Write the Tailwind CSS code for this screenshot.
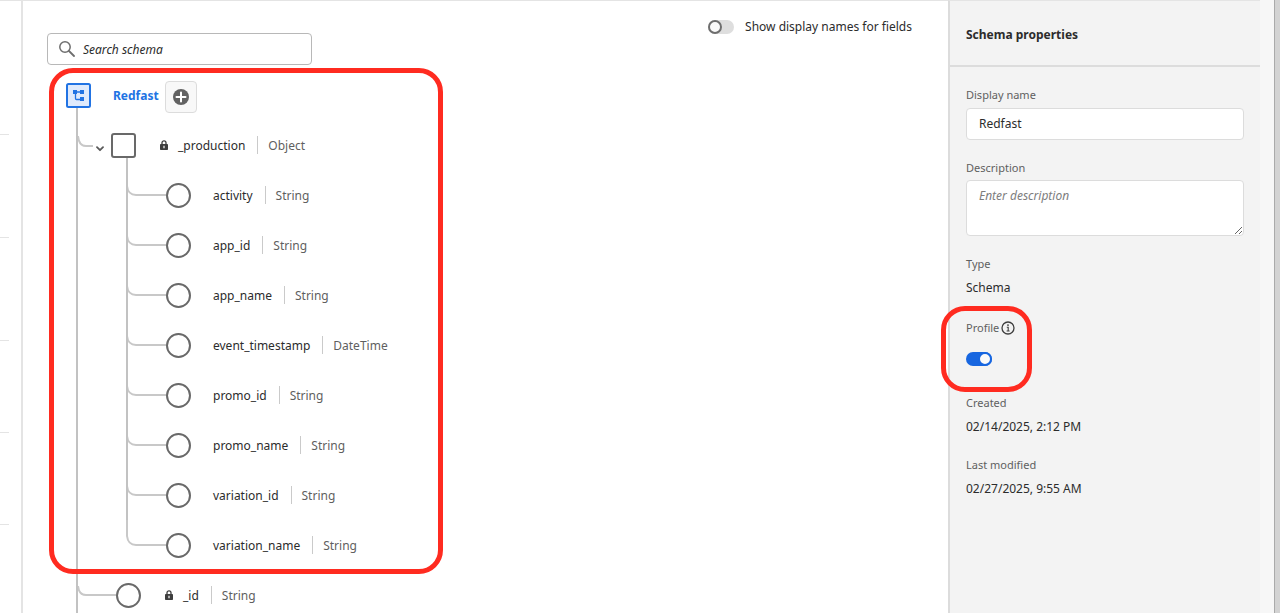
<!DOCTYPE html>
<html lang="en">

<head>
    <meta charset="UTF-8">
    <meta name="viewport" content="width=device-width, initial-scale=1.0">
    <title>Redfast schema</title>
    <script src="https://cdn.jsdelivr.net/npm/@tailwindcss/browser@4"></script>
</head>

<body class="h-screen overflow-hidden flex bg-white font-['Noto_Sans','Open_Sans',sans-serif] text-xs leading-5 text-[#2c2c2c]">
    <!-- Right edge of the field group list -->
    <div class="w-[23px] shrink-0 border-t border-r-2 border-t-[#e4e4e4] border-r-[#e4e4e4]">
        <div class="w-[9px] h-[134px] border-b border-[#e4e4e4]"></div>
        <div class="w-[9px] h-[103px] border-b border-[#e4e4e4]"></div>
        <div class="w-[9px] h-[103px] border-b border-[#e4e4e4]"></div>
        <div class="w-[9px] h-[92px] border-b border-[#e4e4e4]"></div>
        <div class="w-[9px] h-[92px] border-b border-[#e4e4e4]"></div>
    </div>

    <main class="flex-1 min-w-0 border-t border-[#e4e4e4]">
        <div class="flex items-start justify-between pl-6 pr-9">
            <div class="mt-8 w-[265px] h-8 flex items-center gap-2 px-[11px] border border-[#b8b8b8] rounded bg-white">
                <svg class="w-4 h-4 shrink-0" viewBox="0 0 16 16" fill="none" stroke="#6e6e6e" stroke-linecap="round">
                    <circle cx="6" cy="6" r="5.2" stroke-width="1.5" />
                    <path d="M10 10l5 5" stroke-width="1.8" />
                </svg>
                <input type="text" aria-label="Search schema" placeholder="Search schema"
                    class="flex-1 min-w-0 pt-[2px] italic outline-none placeholder:text-[#2c2c2c]">
            </div>
            <label class="mt-4 flex items-center gap-[11px] leading-5">
                <input type="checkbox"
                    class="appearance-none flex w-[26px] h-[14px] rounded-full bg-[#dedede] before:w-[14px] before:h-[14px] before:rounded-full before:border-2 before:border-[#6e6e6e] before:bg-[#fafafa]">
                Show display names for fields
            </label>
        </div>

        <!-- Schema tree -->
        <div class="relative mt-[6px]">
            <div class="h-[49px] flex items-center pl-[43px]">
                <svg class="w-[25px] h-[25px] shrink-0" viewBox="0 0 25 25">
                    <rect x="1" y="1" width="23" height="23" rx="1.5" fill="#dfeafc" stroke="#2173e3" stroke-width="2" />
                    <path d="M9 9h8M9.5 9v6.5q0 1 1 1H15" fill="none" stroke="#2173e3" stroke-width="1.3" />
                    <path d="M7 7h4v4H7zM14 7h4v4h-4zM14 14h4v4h-4z" fill="#2173e3" />
                </svg>
                <a href="#" class="ml-[22px] font-bold text-[#2173e3]">Redfast</a>
                <button type="button" aria-label="Add field"
                    class="ml-[6px] mt-[3px] w-8 h-8 flex items-center justify-center border border-[#dcdcdc] rounded bg-[#f8f8f8]">
                    <svg class="w-4 h-4" viewBox="0 0 16 16">
                        <circle cx="8" cy="8" r="8" fill="#626262" />
                        <path d="M8 3.5v9M3.5 8h9" stroke="#fff" stroke-width="2" stroke-linecap="round" />
                    </svg>
                </button>
            </div>

            <ul class="ml-[53px] -mt-3 pt-3 border-l-2 border-[#c2c2c2]">
                <li>
                    <div class="h-[50px] flex items-center">
                        <svg class="w-[15px] h-[50px]" viewBox="0 0 15 50" fill="none" stroke="#c8c8c8" stroke-width="2">
                            <path d="M0 16q1 10 8 10h7" />
                        </svg>
                        <button type="button" aria-label="Collapse _production" class="mt-[7px] w-[14px] h-[10px] flex items-center justify-center">
                            <svg class="w-2 h-[6px]" viewBox="0 0 8 6" fill="none" stroke="#5a5a5a" stroke-width="1.8" stroke-linecap="round" stroke-linejoin="round">
                                <path d="M1 1.2l3 3 3-3" />
                            </svg>
                        </button>
                        <button type="button" aria-label="Select _production" class="ml-1 mt-px w-[25px] h-[25px] border-2 border-[#696969] rounded-[3px] bg-white"></button>
                        <svg class="ml-6 w-2 h-[10px]" viewBox="0 0 8 10">
                            <path d="M2 5V2.8a2 2 0 0 1 4 0V5" fill="none" stroke="#3e3e3e" stroke-width="1.3" />
                            <rect y="4" width="8" height="6" rx=".8" fill="#3e3e3e" />
                            <path d="M4 5.8v2.4" stroke="#fff" stroke-width="1.2" />
                        </svg>
                        <span class="ml-[10px] pt-[2px]">_production</span>
                        <span class="ml-3 pl-[10px] h-[18px] leading-5 border-l border-[#cacaca] text-[#5f5f5f]">Object</span>
                    </div>

                    <ul id="productionFields" class="ml-12"></ul>
                </li>
                <li>
                    <div class="h-[50px] flex items-center">
                        <svg class="w-[38px] h-[50px]" viewBox="0 0 38 50" fill="none" stroke="#c8c8c8" stroke-width="2">
                            <path d="M0 16q1 9 8 9h30" />
                        </svg>
                        <button type="button" aria-label="Select _id" class="mt-px w-[25px] h-[25px] border-2 border-[#696969] rounded-full bg-white"></button>
                        <svg class="ml-6 w-2 h-[10px]" viewBox="0 0 8 10">
                            <path d="M2 5V2.8a2 2 0 0 1 4 0V5" fill="none" stroke="#3e3e3e" stroke-width="1.3" />
                            <rect y="4" width="8" height="6" rx=".8" fill="#3e3e3e" />
                            <path d="M4 5.8v2.4" stroke="#fff" stroke-width="1.2" />
                        </svg>
                        <span class="ml-[10px] pt-[2px]">_id</span>
                        <span class="ml-3 pl-[10px] h-[18px] leading-5 border-l border-[#cacaca] text-[#5f5f5f]">String</span>
                    </div>
                </li>
            </ul>

            <!-- Highlight around the production fields -->
            <div class="absolute left-[26px] -top-[3px] w-[394px] h-[506px] border-5 border-[#ff2b20] rounded-3xl pointer-events-none"></div>
        </div>
    </main>

    <aside class="w-[312px] shrink-0 border-t border-l-2 border-t-[#e4e4e4] border-l-[#dcdcdc] bg-[#f3f3f3]">
        <h2 class="h-[66px] pl-4 pt-6 border-b-2 border-[#dcdcdc] leading-5 font-bold">Schema properties</h2>
        <div class="px-4 pt-5">
            <label for="displayName" class="block text-[11px] leading-4 text-[#5f5f5f]">Display name</label>
            <input type="text" id="displayName" value="Redfast"
                class="block mt-[5px] w-full h-8 px-3 pb-[2px] border border-[#dcdcdc] rounded bg-white outline-none">
            <label for="description" class="block mt-5 text-[11px] leading-4 text-[#5f5f5f]">Description</label>
            <textarea id="description" placeholder="Enter description"
                class="block mt-1 w-full h-14 px-3 py-[5px] leading-5 border border-[#dcdcdc] rounded bg-white outline-none placeholder:italic placeholder:text-[#7d7d7d]"></textarea>

            <div class="mt-5 text-[11px] leading-4 text-[#5f5f5f]">Type</div>
            <div class="mt-[6px] leading-5">Schema</div>

            <div class="relative mt-[22px]">
                <div class="flex items-center gap-[2px] text-[11px] leading-4 text-[#5f5f5f]">
                    <label for="profile">Profile</label>
                    <svg class="w-[14px] h-[14px]" viewBox="0 0 14 14" fill="none" stroke="#3e3e3e">
                        <circle cx="7" cy="7" r="6" stroke-width="1.3" />
                        <path d="M5.8 6.2H7.2v3.6M5.6 10h3" stroke-width="1.1" />
                        <circle cx="7" cy="4.1" r=".9" fill="#3e3e3e" stroke="none" />
                    </svg>
                </div>
                <input type="checkbox" id="profile" checked
                    class="appearance-none flex justify-end mt-4 w-[26px] h-[14px] rounded-full bg-[#1766e0] before:w-[14px] before:h-[14px] before:rounded-full before:border-2 before:border-[#1766e0] before:bg-[#fafafa]">
                <div class="absolute -left-[25px] -top-[14px] w-[91px] h-[86px] border-5 border-[#ff2b20] rounded-3xl pointer-events-none"></div>
            </div>

            <div class="mt-[29px] text-[11px] leading-4 text-[#5f5f5f]">Created</div>
            <div class="mt-[6px] leading-5">02/14/2025, 2:12 PM</div>
            <div class="mt-5 text-[11px] leading-4 text-[#5f5f5f]">Last modified</div>
            <div class="mt-[6px] leading-5">02/27/2025, 9:55 AM</div>
        </div>
    </aside>
    <div class="w-[14px] shrink-0 bg-[#f7f7f7]"></div>
    <div class="w-[6px] shrink-0 border-l border-[#aaaaaa] bg-[#d3d3d3]"></div>

    <script>
        const fields = [
            ['activity', 'String'],
            ['app_id', 'String'],
            ['app_name', 'String'],
            ['event_timestamp', 'DateTime'],
            ['promo_id', 'String'],
            ['promo_name', 'String'],
            ['variation_id', 'String'],
            ['variation_name', 'String'],
        ];

        document.getElementById('productionFields').innerHTML = fields.map(([name, type], i) => {
            // The trunk stops at the last field
            const trunk = i < fields.length - 1 ? '<path d="M1 -12V50" stroke="#c2c2c2" />' : '';
            return `
                <li class="h-[50px] flex items-center">
                    <svg class="w-10 h-[50px] overflow-visible" viewBox="0 0 40 50" fill="none" stroke="#c8c8c8" stroke-width="2">
                        <path d="M1 0v16q1 9 9 9h30" />${trunk}
                    </svg>
                    <button type="button" aria-label="Select ${name}" class="mt-px w-[25px] h-[25px] border-2 border-[#696969] rounded-full bg-white"></button>
                    <span class="ml-[22px] pt-[2px]">${name}</span>
                    <span class="ml-3 pl-[10px] h-[18px] leading-5 border-l border-[#cacaca] text-[#5f5f5f]">${type}</span>
                </li>`;
        }).join('');
    </script>
</body>

</html>
